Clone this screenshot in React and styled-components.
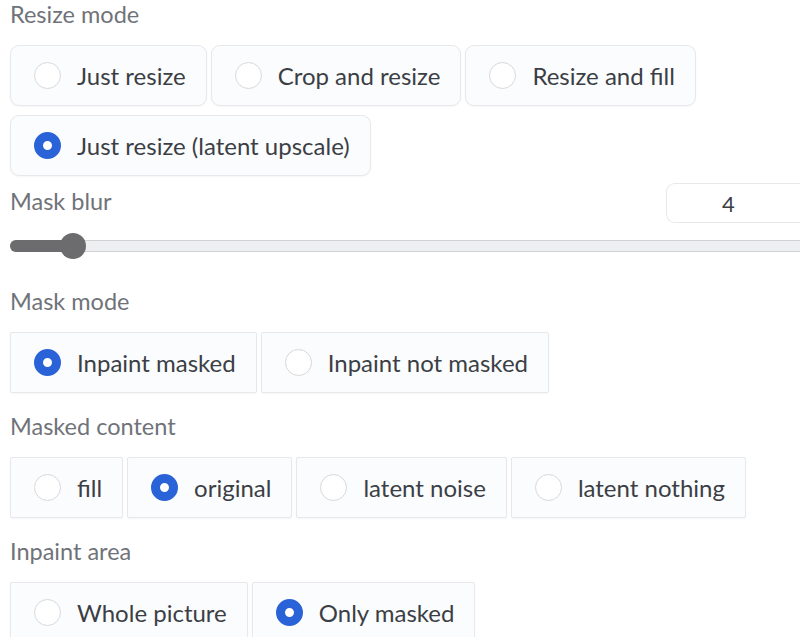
import React from "react";
import styled, { createGlobalStyle } from "styled-components";

const GlobalStyle = createGlobalStyle`
  body {
    margin: 0;
    background: #ffffff;
    overflow: hidden;
    font-family: "Lato", "Noto Sans", sans-serif;
  }
`

// STYLES - layout
const Page = styled.div`
  width: 800px;
  box-sizing: border-box;
  padding-left: 10px;
  display: flex;
  flex-direction: column;
`
const Label = styled.div`
  font-size: 23.5px;
  line-height: 28px;
  color: #6f7379;
  margin-top: ${(p) => p.top || 0}px;
  margin-bottom: 17px;
`
const Options = styled.div`
  display: flex;
  flex-wrap: wrap;
  column-gap: 4px;
  row-gap: 9px;
  width: ${(p) => p.width || "auto"};
`
const Option = styled.label`
  display: flex;
  align-items: center;
  gap: 16px;
  height: 61px;
  box-sizing: border-box;
  padding: 0 20px 0 23px;
  border: 1px solid #e6e8eb;
  border-radius: ${(p) => (p.rounded ? "9px" : "2px")};
  background: #fbfcfd;
  box-shadow: 0 1px 2px rgba(0, 0, 0, 0.04);
  font-size: 24px;
  color: #3b3f45;
  cursor: pointer;
`
const Radio = styled.span`
  width: 27px;
  height: 27px;
  box-sizing: border-box;
  border-radius: 50%;
  flex-shrink: 0;
  background: #ffffff;
  border: ${(p) => (p.checked ? "9px solid #2a62d8" : "1.5px solid #d6d8db")};
`

// mask blur slider - right side is cut by the window edge
const SliderHead = styled.div`
  display: flex;
  justify-content: space-between;
  align-items: center;
  height: 40px;
  margin-top: 7px;
`
const HeadLabel = styled.div`
  font-size: 23.5px;
  margin-top: -4px;
  color: #6f7379;
`
const NumberBox = styled.div`
  width: 134px;
  height: 40px;
  box-sizing: border-box;
  border: 1px solid #e6e8eb;
  border-right: none;
  border-radius: 9px 0 0 9px;
  display: flex;
  align-items: center;
  padding-left: 55px;
  font-size: 22px;
  color: #3b3f45;
`
const Slider = styled.div`
  height: 26px;
  margin-top: 10px;
  display: flex;
  align-items: center;
`
const Track = styled.div`
  position: relative;
  flex: 1;
  height: 12px;
  box-sizing: border-box;
  border: 1px solid #cfd1d4;
  border-right: none;
  border-radius: 6px 0 0 6px;
  background: #eeeff1;
`
const Fill = styled.div`
  position: absolute;
  left: -1px;
  top: -1px;
  bottom: -1px;
  border-radius: 6px;
  background: #6c6c6e;
`
const Thumb = styled.div`
  position: absolute;
  top: 50%;
  width: 26px;
  height: 26px;
  margin: -13px 0 0 -13px;
  border-radius: 50%;
  background: #6c6c6e;
`

const RadioGroup = ({ label, top, options, value, rounded }) => (
  <>
    <Label top={top}>{label}</Label>
    <Options width={rounded ? "700px" : "auto"}>
      {options.map((o) => (
        <Option key={o} rounded={rounded}>
          <Radio checked={o === value} />
          {o}
        </Option>
      ))}
    </Options>
  </>
)

const App = () => {
  const blur = 4;
  const pos = 62; // px of fill along track

  return (
    <Page>
      <GlobalStyle />
      <RadioGroup
        label="Resize mode"
        rounded
        options={["Just resize", "Crop and resize", "Resize and fill", "Just resize (latent upscale)"]}
        value="Just resize (latent upscale)"
      />

      <SliderHead>
        <HeadLabel>Mask blur</HeadLabel>
        <NumberBox>{blur}</NumberBox>
      </SliderHead>
      <Slider>
        <Track>
          <Fill style={{ width: pos }} />
          <Thumb style={{ left: pos }} />
        </Track>
      </Slider>

      <RadioGroup
        label="Mask mode"
        top={28}
        options={["Inpaint masked", "Inpaint not masked"]}
        value="Inpaint masked"
      />
      <RadioGroup
        label="Masked content"
        top={19}
        options={["fill", "original", "latent noise", "latent nothing"]}
        value="original"
      />
      <RadioGroup
        label="Inpaint area"
        top={19}
        options={["Whole picture", "Only masked"]}
        value="Only masked"
      />
    </Page>
  );
};
export default App;
